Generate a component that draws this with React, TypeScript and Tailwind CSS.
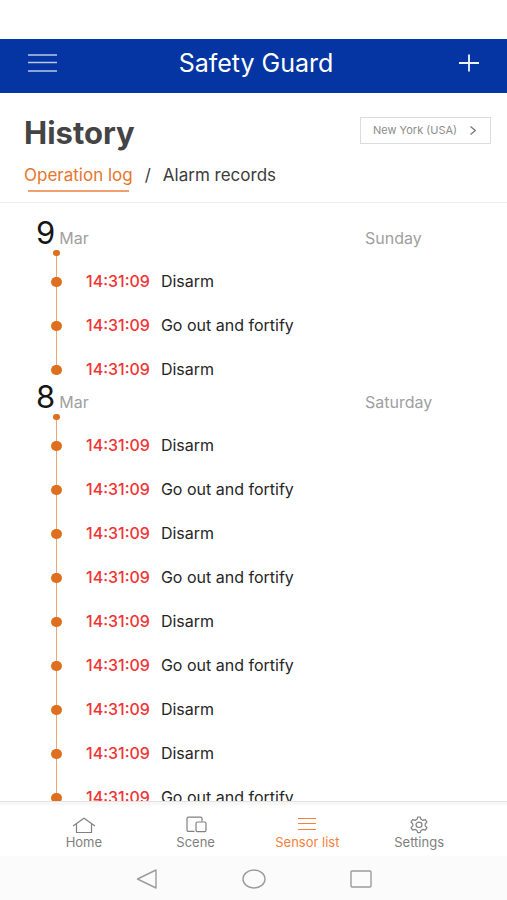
import type { ReactNode } from "react";

type Entry = { time: string; action: string };
type Day = { day: string; month: string; weekday: string; entries: Entry[] };

const disarm: Entry = { time: "14:31:09", action: "Disarm" };
const fortify: Entry = { time: "14:31:09", action: "Go out and fortify" };

const days: Day[] = [
  { day: "9", month: "Mar", weekday: "Sunday", entries: [disarm, fortify, disarm] },
  {
    day: "8",
    month: "Mar",
    weekday: "Saturday",
    entries: [disarm, fortify, disarm, fortify, disarm, fortify, disarm, disarm, fortify],
  },
];

function Header() {
  return (
    <header className="mt-[39px] flex h-[54px] shrink-0 items-center justify-between bg-[#0435a2] px-7 pb-[6px] text-white">
      <button type="button" aria-label="Menu">
        <svg width="29" height="20" viewBox="0 0 29 20" fill="none" stroke="#b9c8ec" strokeWidth="1.5">
          <path d="M0 2h29M0 9.5h29M0 18h29" />
        </svg>
      </button>
      <div className="text-[25px] leading-8">Safety Guard</div>
      <button type="button" aria-label="Add" className="flex w-6 justify-end">
        <svg width="20" height="18" viewBox="0 0 20 18" fill="none" stroke="#f0f4ff" strokeWidth="1.8">
          <path d="M0 9h20M10 0.5v17" />
        </svg>
      </button>
    </header>
  );
}

function HistoryHead() {
  return (
    <section className="shrink-0 border-b border-[#ececec] pt-6 pr-4 pb-[10px] pl-6">
      <div className="flex items-start justify-between">
        <h1 className="text-[31px] leading-8 font-bold text-[#444444]">History</h1>
        <button
          type="button"
          className="flex h-[27px] w-[131px] items-center justify-between border border-[#dcdcdc] pr-[14px] pl-3 text-[11px] text-[#8c8c8c]"
        >
          New York (USA)
          <svg width="6" height="9" viewBox="0 0 6 9" fill="none" stroke="#777777" strokeWidth="1.3">
            <path d="M0.5 0.5L5.3 4.5L0.5 8.5" />
          </svg>
        </button>
      </div>
      <nav className="mt-3 flex gap-3 text-[17px] leading-[29px] text-[#3c3c3c]">
        <a href="#operation" className="flex flex-col text-[#e6762c]">
          Operation log
          <span className="mx-1 h-[2px] bg-[#f0a070]" />
        </a>
        <span>/</span>
        <a href="#alarm">Alarm records</a>
      </nav>
    </section>
  );
}

function DayGroup({ day, month, weekday, entries }: Day) {
  return (
    <section>
      <div className="flex h-[31px] items-baseline leading-[27px] text-[#a0a0a0]">
        <h2 className="flex w-[72%] items-baseline gap-1 pl-9 text-base leading-[27px]">
          <span className="text-[31px] text-[#161616]">{day}</span>
          {month}
        </h2>
        <span>{weekday}</span>
      </div>
      <div className="ml-[51px] flex h-[10px] w-[11px] flex-col items-center">
        <span className="h-[6px] w-[7px] shrink-0 rounded-full bg-[#dd6f1e]" />
        <span className="w-px flex-1 bg-[#eca577]" />
      </div>
      <ol>
        {entries.map((entry, i) => {
          const last = i === entries.length - 1;
          return (
            <li key={i} className="flex h-11 pl-[51px] last:h-[35px]">
              <span className="flex w-[11px] flex-col items-center">
                <span className="h-[17px] w-px bg-[#eca577]" />
                <span className="h-[10px] w-[11px] rounded-full bg-[#dd6f1e]" />
                {!last && <span className="w-px flex-1 bg-[#eca577]" />}
              </span>
              <p className="flex gap-[11px] pl-6 text-base leading-[43px] text-[#262626]">
                <time className="font-medium text-[#f03434]">{entry.time}</time>
                {entry.action}
              </p>
            </li>
          );
        })}
      </ol>
    </section>
  );
}

function Tab({ label, href, active, children }: { label: string; href: string; active?: boolean; children: ReactNode }) {
  return (
    <a
      href={href}
      className={
        active
          ? "flex flex-1 flex-col items-center text-[#f5813a]"
          : "flex flex-1 flex-col items-center text-[#808080]"
      }
    >
      <svg width="24" height="18" viewBox="0 0 24 18" fill="none" stroke="currentColor" strokeWidth="1.2">
        {children}
      </svg>
      <span className="text-[13px] leading-4">{label}</span>
    </a>
  );
}

function TabBar() {
  return (
    <nav className="flex h-[55px] shrink-0 border-t border-[#e2e2e2] bg-white pt-[14px] pr-8 pl-7 shadow-[inset_0_3px_0_#f7f7f7]">
      <Tab label="Home" href="#home">
        <path d="M1 10L12 2.2L23 10M4.5 8v8.5h15V8" />
      </Tab>
      <Tab label="Scene" href="#scene">
        <path d="M10.5 15.4H4.4a1.4 1.4 0 0 1-1.4-1.4V2.6A1.4 1.4 0 0 1 4.4 1.2h12.2A1.4 1.4 0 0 1 18 2.6v3" />
        <rect x="12" y="6" width="10" height="9.6" rx="1.4" />
      </Tab>
      <Tab label="Sensor list" href="#sensors" active>
        <path d="M3 2.5h18M3 7.5h18M3 13.5h18" />
      </Tab>
      <Tab label="Settings" href="#settings">
        <path
          strokeLinejoin="round"
          d="M10 3.3L10.7 1h2.6l.7 2.3 1.7 1 2.6-.7L20 6l-1.8 1.9v1.9L20 11.7l-1.7 2.4-2.6-.7-1.7 1-.7 2.2h-2.6l-.7-2.2-1.7-1-2.6.7L4 11.7l1.8-1.9V7.9L4 6l1.7-2.4 2.6.7z"
        />
        <ellipse cx="12" cy="8.8" rx="3" ry="2.7" />
      </Tab>
    </nav>
  );
}

function SystemBar() {
  return (
    <div className="flex h-11 shrink-0 items-center justify-center gap-[84px] bg-[#fbfbfb] pt-[2px] text-[#9c9c9c]">
      <button type="button" aria-label="Back">
        <svg width="22" height="20" viewBox="0 0 22 20" fill="none" stroke="currentColor" strokeWidth="1.4" strokeLinejoin="round">
          <path d="M20 1v18L1.5 10z" />
        </svg>
      </button>
      <button type="button" aria-label="Home screen">
        <svg width="24" height="20" viewBox="0 0 24 20" fill="none" stroke="currentColor" strokeWidth="1.4">
          <ellipse cx="12" cy="10" rx="11" ry="9" />
        </svg>
      </button>
      <button type="button" aria-label="Recent apps">
        <svg width="22" height="20" viewBox="0 0 22 20" fill="none" stroke="currentColor" strokeWidth="1.4">
          <rect x="1" y="2" width="20" height="16" rx="1" />
        </svg>
      </button>
    </div>
  );
}

export default function App() {
  return (
    <div className="flex h-screen flex-col bg-white font-['Inter',sans-serif]">
      <Header />
      <HistoryHead />
      <main className="min-h-0 flex-1 overflow-y-auto pt-4 [scrollbar-width:none]">
        {days.map((d) => (
          <DayGroup key={d.day} {...d} />
        ))}
      </main>
      <TabBar />
      <SystemBar />
    </div>
  );
}
